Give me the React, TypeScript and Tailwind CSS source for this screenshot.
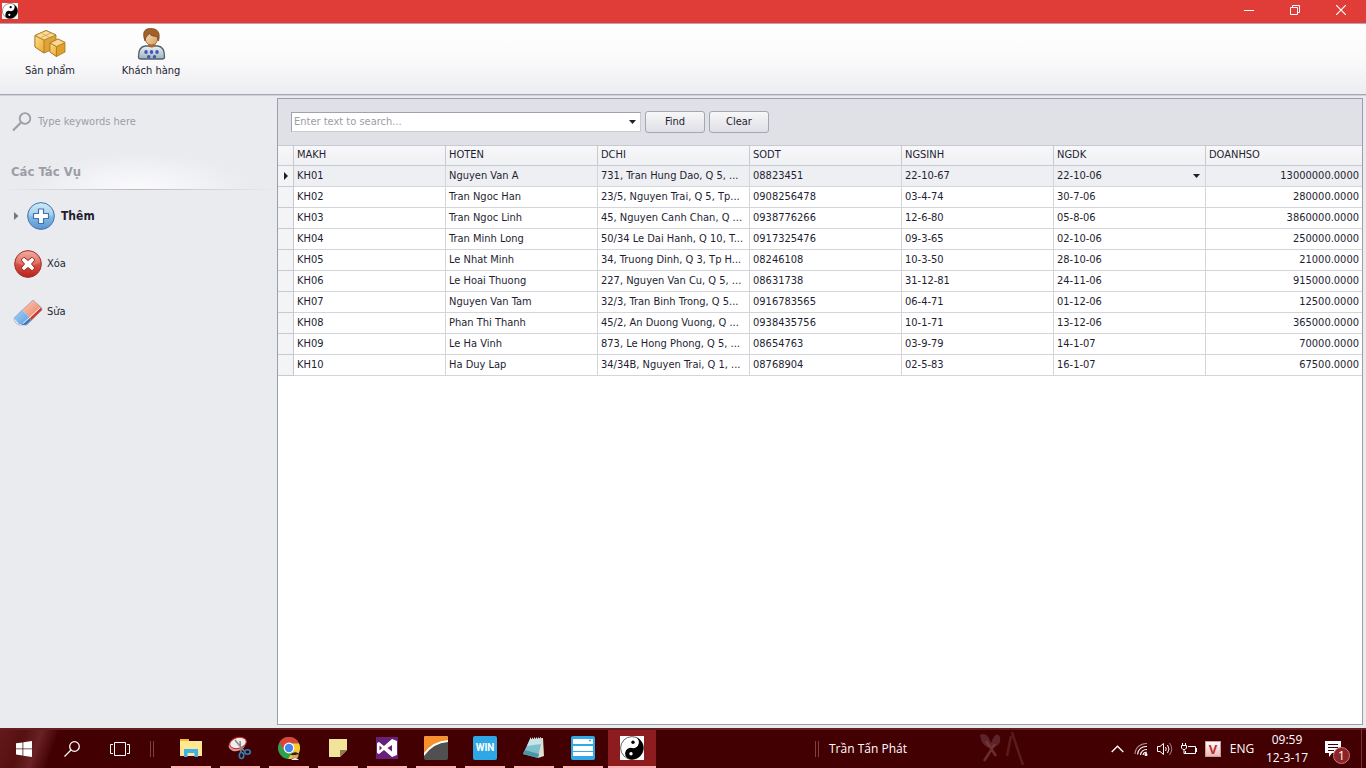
import React from 'react';

interface Customer {
  id: string;
  name: string;
  address: string;
  phone: string;
  birthday: string;
  registered: string;
  sales: string;
}

const customers: Customer[] = [
  { id: 'KH01', name: 'Nguyen Van A', address: '731, Tran Hung Dao, Q 5, ...', phone: '08823451', birthday: '22-10-67', registered: '22-10-06', sales: '13000000.0000' },
  { id: 'KH02', name: 'Tran Ngoc Han', address: '23/5, Nguyen Trai, Q 5, Tp...', phone: '0908256478', birthday: '03-4-74', registered: '30-7-06', sales: '280000.0000' },
  { id: 'KH03', name: 'Tran Ngoc Linh', address: '45, Nguyen Canh Chan, Q ...', phone: '0938776266', birthday: '12-6-80', registered: '05-8-06', sales: '3860000.0000' },
  { id: 'KH04', name: 'Tran Minh Long', address: '50/34 Le Dai Hanh, Q 10, T...', phone: '0917325476', birthday: '09-3-65', registered: '02-10-06', sales: '250000.0000' },
  { id: 'KH05', name: 'Le Nhat Minh', address: '34, Truong Dinh, Q 3, Tp H...', phone: '08246108', birthday: '10-3-50', registered: '28-10-06', sales: '21000.0000' },
  { id: 'KH06', name: 'Le Hoai Thuong', address: '227, Nguyen Van Cu, Q 5, ...', phone: '08631738', birthday: '31-12-81', registered: '24-11-06', sales: '915000.0000' },
  { id: 'KH07', name: 'Nguyen Van Tam', address: '32/3, Tran Binh Trong, Q 5...', phone: '0916783565', birthday: '06-4-71', registered: '01-12-06', sales: '12500.0000' },
  { id: 'KH08', name: 'Phan Thi Thanh', address: '45/2, An Duong Vuong, Q ...', phone: '0938435756', birthday: '10-1-71', registered: '13-12-06', sales: '365000.0000' },
  { id: 'KH09', name: 'Le Ha Vinh', address: '873, Le Hong Phong, Q 5, ...', phone: '08654763', birthday: '03-9-79', registered: '14-1-07', sales: '70000.0000' },
  { id: 'KH10', name: 'Ha Duy Lap', address: '34/34B, Nguyen Trai, Q 1, ...', phone: '08768904', birthday: '02-5-83', registered: '16-1-07', sales: '67500.0000' },
];

const columns = ['MAKH', 'HOTEN', 'DCHI', 'SODT', 'NGSINH', 'NGDK', 'DOANHSO'];

const YinYang = ({ className }: { className: string }) => (
  <svg viewBox="0 0 24 24" className={className}>
    <rect width="24" height="24" fill="#fff" />
    <circle cx="12" cy="12" r="11.4" fill="#fff" stroke="#222" strokeWidth=".7" />
    <path d="M12 .6A11.4 11.4 0 0 1 12 23.4A5.700 5.700 0 0 1 12 12A5.700 5.700 0 0 0 12 .6Z" fill="#000" transform="rotate(12 12 12)" />
    <circle cx="13" cy="6.300" r="1.700" fill="#000" />
    <circle cx="11" cy="17.700" r="1.700" fill="#fff" />
  </svg>
);

const BoxesIcon = () => (
  <svg width="32" height="32" viewBox="0 0 32 32">
    <defs>
      <linearGradient id="boxFront" x1="0" y1="0" x2="1" y2="1">
        <stop offset="0" stopColor="#ffdf8e" />
        <stop offset="1" stopColor="#e9a92d" />
      </linearGradient>
    </defs>
    <g stroke="#a87421" strokeWidth=".8" strokeLinejoin="round">
      <path d="M1 7.500 12 2.500 22 7 22 20 10 25 1 19Z" fill="#dfa33b" />
      <path d="M1 7.500 10 12V25L1 19Z" fill="url(#boxFront)" />
      <path d="M1 7.500 12 2.500 22 7 10 12Z" fill="#fbdc94" />
      <path d="M16 15 24 11 31 14.500V24L22.500 28.500 16 24Z" fill="#dfa02e" />
      <path d="M16 15 22.500 18.500V28.500L16 24Z" fill="url(#boxFront)" />
      <path d="M16 15 24 11 31 14.500 22.500 18.500Z" fill="#fbd98c" />
    </g>
    <path d="M7 9.500 17 4.900M8 5.500 15 9" stroke="#c79845" strokeWidth=".7" fill="none" />
  </svg>
);

const CustomerIcon = () => (
  <svg width="32" height="32" viewBox="0 0 32 32">
    <defs>
      <linearGradient id="shirt" x1="0" y1="0" x2="0" y2="1">
        <stop offset="0" stopColor="#eef2f5" />
        <stop offset="1" stopColor="#9fb0bd" />
      </linearGradient>
      <linearGradient id="face" x1="0" y1="0" x2="1" y2="1">
        <stop offset="0" stopColor="#ffe7c4" />
        <stop offset="1" stopColor="#d39a5e" />
      </linearGradient>
    </defs>
    <path d="M3.500 29C3.500 21 6 18.500 10 18H23C27 18.500 29.500 22 29.500 29Q29.500 31 27 31H6Q3.500 31 3.500 29Z" fill="url(#shirt)" stroke="#4f6170" strokeWidth="1.300" />
    <path d="M13 14H20.500V18Q16.500 21 13 18Z" fill="#a9683a" />
    <path d="M10 8Q10 1.500 16.500 1.500Q23 1.500 23 8Q23 17 16.500 17Q10 17 10 8Z" fill="url(#face)" stroke="#96602f" strokeWidth=".8" />
    <path d="M10 13C7 5 9 .6 15 .5C22 .1 26 4 23.500 13L22 8.500C18 8.500 15 7.500 14 5C13.500 7.500 12 8.500 11 9Z" fill="#a3602b" stroke="#743f17" strokeWidth=".7" />
    <g fill="#3e56b4">
      <ellipse cx="11" cy="24" rx="1.700" ry="2.100" />
      <ellipse cx="16.500" cy="24" rx="1.700" ry="2.100" />
      <ellipse cx="22" cy="24" rx="1.700" ry="2.100" />
      <ellipse cx="13.700" cy="28.700" rx="1.700" ry="1.700" />
      <ellipse cx="19.500" cy="28.700" rx="1.700" ry="1.700" />
    </g>
  </svg>
);

const AddIcon = () => (
  <svg width="28" height="28" viewBox="0 0 28 28">
    <defs>
      <linearGradient id="addBlue" x1="0" y1="0" x2="0" y2="1">
        <stop offset="0" stopColor="#c4e6f5" />
        <stop offset=".5" stopColor="#86bfe3" />
        <stop offset="1" stopColor="#5993cf" />
      </linearGradient>
    </defs>
    <circle cx="14" cy="14" r="13.400" fill="url(#addBlue)" stroke="#4777b3" />
    <path d="M2 13C2 -2 26 -2 26 13Q14 18 2 13Z" fill="#fff" opacity=".22" />
    <path d="M11.500 7H16.500V11.500H21.500V16.500H16.500V21.500H11.500V16.500H6.500V11.500H11.500Z" fill="#fff" stroke="#4272ad" strokeWidth="1.200" strokeLinejoin="round" />
  </svg>
);

const DeleteIcon = () => (
  <svg width="28" height="28" viewBox="0 0 28 28">
    <defs>
      <linearGradient id="deleteRed" x1="0" y1="0" x2="0" y2="1">
        <stop offset="0" stopColor="#eea295" />
        <stop offset=".5" stopColor="#d65345" />
        <stop offset="1" stopColor="#b8201b" />
      </linearGradient>
    </defs>
    <circle cx="14" cy="14" r="13.400" fill="url(#deleteRed)" stroke="#a63832" />
    <path d="M2 13C2 -2 26 -2 26 13Q14 18 2 13Z" fill="#fff" opacity=".15" />
    <path d="M10 7.200 14 10.500 18 7.200 20.800 10 17.500 14 20.800 18 18 20.800 14 17.500 10 20.800 7.200 18 10.500 14 7.200 10Z" fill="#fff" stroke="#9f2522" strokeWidth="1" strokeLinejoin="round" />
  </svg>
);

const EraserIcon = () => (
  <svg width="30" height="28" viewBox="0 0 30 28">
    <defs>
      <linearGradient id="rubberRed" x1="0" y1="0" x2="1" y2="1">
        <stop offset="0" stopColor="#f9cbb5" />
        <stop offset="1" stopColor="#ee8064" />
      </linearGradient>
      <linearGradient id="rubberBlue" x1="0" y1="0" x2="1" y2="1">
        <stop offset="0" stopColor="#a5d0f8" />
        <stop offset="1" stopColor="#5c9fe2" />
      </linearGradient>
    </defs>
    <path d="M9 12 20 2 28 9 17 20Z" fill="url(#rubberRed)" />
    <path d="M28 9 29 12 18 22.500 17 20Z" fill="#cf3a2b" />
    <path d="M1 20 9 12 17 20 11 26 6 26Z" fill="url(#rubberBlue)" />
    <path d="M11 25 17 20 18 22.500 13 27H8Z" fill="#3c79c3" />
    <path d="M10 25.500 27.500 9.500" stroke="#fbe9e4" strokeWidth="1" />
    <path d="M1 20 20 2 29 10V12L14 27H6Q1 25 1 20Z" fill="none" stroke="#7d8ab0" strokeWidth=".5" />
  </svg>
);

const Down = () => (
  <svg width="7" height="4" viewBox="0 0 7 4">
    <path d="M0 0H7L3.500 4Z" fill="#1e1e32" />
  </svg>
);

const TitleBar = () => (
  <header className="flex h-6 shrink-0 items-start justify-between border-b border-[#b5a5b1] bg-[#e03c38] pr-0.5">
    <YinYang className="ml-0.5 mt-[3px] h-4 w-4" />
    <div className="flex h-5">
      <button aria-label="Minimize" className="flex w-[46px] items-center justify-center">
        <svg width="10" height="10" viewBox="0 0 10 10"><path d="M0 5.500H10" stroke="#fff" /></svg>
      </button>
      <button aria-label="Restore" className="flex w-[46px] items-center justify-center">
        <svg width="10" height="10" viewBox="0 0 10 10" fill="none" stroke="#fff">
          <path d="M.5 2.500H7.500V9.500H.5ZM2.500 2V.5H9.500V7.500H8" />
        </svg>
      </button>
      <button aria-label="Close" className="flex w-[46px] items-center justify-center">
        <svg width="10" height="10" viewBox="0 0 10 10"><path d="M0 0 10 10M10 0 0 10" stroke="#fff" strokeWidth="1.200" /></svg>
      </button>
    </div>
  </header>
);

const Ribbon = () => (
  <nav className="flex h-[71px] shrink-0 border-b border-[#a6a8b5] bg-gradient-to-b from-white via-[#fafafb] to-[#ecedf1]">
    <button className="flex w-[100px] flex-col items-center gap-0.5 pt-1">
      <BoxesIcon />
      <span className="leading-[18px]">Sản phẩm</span>
    </button>
    <button className="flex w-[102px] flex-col items-center gap-0.5 pt-1">
      <CustomerIcon />
      <span className="leading-[18px]">Khách hàng</span>
    </button>
  </nav>
);

const Sidebar = () => (
  <aside className="w-[277px] shrink-0">
    <label className="mt-1 flex h-10 items-center gap-1.5 pl-3">
      <svg width="20" height="20" viewBox="0 0 20 20" fill="none" stroke="#9c9da7">
        <circle cx="13" cy="6.500" r="5.300" strokeWidth="1.800" />
        <path d="M9 10.500 1 18.500" strokeWidth="2.200" />
      </svg>
      <input
        type="text"
        aria-label="Search tasks"
        placeholder="Type keywords here"
        className="w-52 bg-transparent outline-none placeholder:text-[#9c9da7]"
      />
    </label>
    <div className="mt-2 h-[39px] bg-[radial-gradient(ellipse_110px_36px_at_bottom,#fbfbfc_0%,#eaebef_100%)]">
      <h2 className="pl-[11px] pt-3 text-[13px] font-bold leading-5 text-[#9c9da7]">Các Tác Vụ</h2>
    </div>
    <div className="h-px bg-gradient-to-r from-[#eaebef] via-[#b7bbc6] to-[#eaebef]" />
    <ul className="pt-0.5">
      <li>
        <button className="flex h-12 items-center gap-1.5 pl-3.5 text-[12px] font-bold">
          <svg width="6" height="8" viewBox="0 0 6 8" className="mr-px">
            <path d="M0 0 4.500 4 0 8Z" fill="#77777d" />
          </svg>
          <AddIcon />
          Thêm
        </button>
      </li>
      <li>
        <button className="flex h-12 items-center gap-[5px] pl-3.5">
          <DeleteIcon />
          Xóa
        </button>
      </li>
      <li>
        <button className="flex h-12 items-center gap-1 pl-[13px]">
          <EraserIcon />
          Sửa
        </button>
      </li>
    </ul>
  </aside>
);

const SearchBar = () => (
  <div className="flex h-[46px] items-center gap-1 bg-[#e0e1e6] pl-[13px]">
    <div className="flex h-5 w-[350px] items-center border border-t-[#a0a2b0] border-l-[#a0a2b0] border-[#c9cad2] bg-white">
      <input
        type="text"
        aria-label="Search text"
        placeholder="Enter text to search..."
        className="min-w-0 flex-1 bg-transparent px-0.5 outline-none placeholder:text-[#9c9da7]"
      />
      <button aria-label="Search history" className="flex h-full w-4 items-center justify-center">
        <Down />
      </button>
    </div>
    <button className="h-[22px] w-[60px] rounded-[3px] border border-[#a4a6b2] bg-gradient-to-b from-[#f7f7f9] to-[#dfe0e6]">Find</button>
    <button className="h-[22px] w-[60px] rounded-[3px] border border-[#a4a6b2] bg-gradient-to-b from-[#f7f7f9] to-[#dfe0e6]">Clear</button>
  </div>
);

const CustomerTable = () => (
  <table className="w-full table-fixed border-separate border-spacing-0">
    <colgroup>
      <col className="w-[16px]" />
      {columns.map((column) => (
        <col key={column} className={column === 'DOANHSO' ? '' : 'w-[152px]'} />
      ))}
    </colgroup>
    <thead>
      <tr className="h-[21px] bg-gradient-to-b from-[#f8f8fa] to-[#eff0f3]">
        <td className="border-y border-r border-[#c8cad3] p-0" />
        {columns.map((column) => (
          <th key={column} className="border-y border-r border-[#c8cad3] p-0 pb-0.5 pl-[3px] text-left font-normal last:border-r-0">
            {column}
          </th>
        ))}
      </tr>
    </thead>
    <tbody>
      {customers.map((customer, index) => {
        const cell = 'truncate border-r border-b border-[#d4d5da] p-0 pl-[3px]';
        return (
          <tr key={customer.id} className={`h-[21px] ${index === 0 ? 'bg-[#eeeff2]' : 'bg-white'}`}>
            <td className="border-r border-b border-[#c8cad3] bg-[#f4f4f7] p-0">
              {index === 0 && (
                <svg width="4" height="8" viewBox="0 0 4 8" className="mx-auto">
                  <path d="M0 0 4 4 0 8Z" fill="#1e1e32" />
                </svg>
              )}
            </td>
            <td className={cell}>{customer.id}</td>
            <td className={cell}>{customer.name}</td>
            <td className={cell}>{customer.address}</td>
            <td className={cell}>{customer.phone}</td>
            <td className={cell}>{customer.birthday}</td>
            <td className={cell}>
              {index === 0 ? (
                <div className="flex items-center justify-between pr-[5px]">
                  {customer.registered}
                  <button aria-label="Pick date"><Down /></button>
                </div>
              ) : customer.registered}
            </td>
            <td className="border-b border-[#d4d5da] p-0 pr-[3px] text-right">{customer.sales}</td>
          </tr>
        );
      })}
    </tbody>
  </table>
);

const ExplorerIcon = () => (
  <svg width="24" height="24" viewBox="0 0 24 24">
    <path d="M1 3H10V5H23V20H1Z" fill="#ffe793" />
    <path d="M1 3H10V5H1Z" fill="#f5bd36" />
    <path d="M5 21V13H19V21H15.500V17H8.500V21Z" fill="#3db2e8" />
  </svg>
);

const SnipIcon = () => (
  <svg width="24" height="24" viewBox="0 0 24 24" fill="none">
    <ellipse cx="9" cy="9" rx="8.500" ry="6" fill="#d99" transform="rotate(-15 9 9)" />
    <ellipse cx="10" cy="7" rx="8.500" ry="5.500" fill="#efecec" stroke="#c0292d" strokeWidth="1" transform="rotate(-15 10 7)" />
    <path d="M7 4 16 15M12 5 13 16" stroke="#888" strokeWidth="1.500" />
    <ellipse cx="13.500" cy="19.500" rx="2.200" ry="3" stroke="#2a83b8" strokeWidth="1.600" />
    <ellipse cx="19.500" cy="16" rx="2.800" ry="2.200" stroke="#2a83b8" strokeWidth="1.600" />
  </svg>
);

const ChromeIcon = () => (
  <svg width="24" height="24" viewBox="0 0 24 24">
    <circle cx="12" cy="12" r="11" fill="#2da14f" />
    <path d="M2.500 6.500A11 11 0 0 1 22 7.500H12L7 14.500Z" fill="#dc4437" />
    <path d="M22 7.500A11 11 0 0 1 11 23L16.500 14.500 12 7.500Z" fill="#fbcb2e" />
    <circle cx="12" cy="12" r="5.400" fill="#fff" />
    <circle cx="12" cy="12" r="4.200" fill="#4587f2" />
    <circle cx="18" cy="19" r="3.500" fill="#d5a75a" />
    <path d="M13 19Q18 14 22 18L18 19Z" fill="#2b211c" />
    <path d="M14 24Q18 20 22 24Z" fill="#eee" />
  </svg>
);

const StickyIcon = () => (
  <svg width="24" height="24" viewBox="0 0 24 24">
    <path d="M3 3H21V14L14 21H3Z" fill="#f0e49a" />
    <path d="M14 14H21L14 21Z" fill="#927a55" />
  </svg>
);

const StudioIcon = () => (
  <svg width="24" height="24" viewBox="0 0 24 24">
    <path d="M1 1H23V23H1Z" fill="#68217a" />
    <path d="M17 3 22 5V19L17 21 9 14 4 18 2 17V7L4 6 9 10ZM17 9 12.500 12 17 15.500ZM4.500 9.500V14.500L7 12Z" fill="#fff" fillRule="evenodd" />
  </svg>
);

const SwooshIcon = () => (
  <svg width="24" height="24" viewBox="0 0 24 24">
    <rect width="24" height="24" rx="2" fill="#505050" />
    <path d="M0 20V2Q0 0 2 0H22Q24 0 24 2V6Q9 7 0 20Z" fill="#fff" />
    <path d="M0 17V2Q0 0 2 0H22Q24 0 24 2V4Q9 5 0 17Z" fill="#f8912b" />
  </svg>
);

const WinIcon = () => (
  <span className="flex h-6 w-6 items-center justify-center rounded-xs bg-[#2ea7e7] font-['Roboto',sans-serif] text-[10px] font-bold text-white">
    WIN
  </span>
);

const NotepadIcon = () => (
  <svg width="24" height="24" viewBox="0 0 24 24">
    <path d="M9 3 21 2 22 20 16 22Z" fill="#e2dfd0" />
    <path d="M8 3 20 3 16 22 1 18Z" fill="#80c0cc" />
    <path d="M8 3 20 3 19 8 5 10Z" fill="#c5e5e9" />
    <path d="M1 18 16 22 17 18 3 14Z" fill="#4c97a7" />
    <path d="M8 2.500 20 2" stroke="#ddd" strokeWidth="1.500" strokeDasharray="1 1" />
  </svg>
);

const ServerIcon = () => (
  <svg width="24" height="24" viewBox="0 0 24 24">
    <rect width="24" height="24" rx="2" fill="#30a9e8" />
    <path d="M2 3H22V8H2ZM2 10H22V15H2ZM2 16H22V20H2Z" fill="#fff" />
    <path d="M18 4.500H20" stroke="#30a9e8" strokeWidth="1.500" />
  </svg>
);

const apps = [
  { name: 'File Explorer', icon: <ExplorerIcon /> },
  { name: 'Snipping Tool', icon: <SnipIcon /> },
  { name: 'Google Chrome', icon: <ChromeIcon /> },
  { name: 'Sticky Notes', icon: <StickyIcon /> },
  { name: 'Visual Studio', icon: <StudioIcon /> },
  { name: 'Swoosh', icon: <SwooshIcon /> },
  { name: 'Windows panel', icon: <WinIcon /> },
  { name: 'Notepad', icon: <NotepadIcon /> },
  { name: 'Server', icon: <ServerIcon /> },
];

const Grip = () => (
  <div className="h-4 w-[4px] border-x border-[#7c4040]" />
);

// wallpaper shining through the bar
const Petals = () => (
  <svg width="50" height="36" viewBox="0 0 50 36" fill="none" className="ml-auto mr-[76px]">
    <path d="M1 4Q8 0 12 12Q17 -1 21 6Q23 15 12 17Q2 16 1 4Z" fill="#5e2328" />
    <path d="M7 10 17 25M16 13 5 30" stroke="#7a3f3f" strokeWidth="2.500" opacity=".7" />
    <path d="M33 1Q37 14 44 34M32 5 28 25" stroke="#5a1b1d" strokeWidth="2.500" />
  </svg>
);

const Tray = () => (
  <div className="flex items-center">
    <button aria-label="Show hidden icons" className="flex w-6 justify-center">
      <svg width="13" height="8" viewBox="0 0 13 8" fill="none" stroke="#fff" strokeWidth="1.300"><path d="M.7 7 6.500 1.200 12.300 7" /></svg>
    </button>
    <button aria-label="Network" className="flex w-6 justify-center">
      <svg width="14" height="14" viewBox="0 0 14 14" fill="none" stroke="#fff" strokeWidth="1.100">
        <path d="M1 12A11 11 0 0 1 13 1.500" opacity=".6" />
        <path d="M3.500 12.500A8.500 8.500 0 0 1 13 4.500M6.500 13A6 6 0 0 1 13 7.500M9 13A3.500 3.500 0 0 1 13 10.300" />
        <circle cx="12" cy="12.500" r="1" fill="#fff" />
      </svg>
    </button>
    <button aria-label="Volume" className="flex w-6 justify-center">
      <svg width="16" height="14" viewBox="0 0 16 14" fill="none" stroke="#fff">
        <path d="M.5 4.500H3L6.500 1.500V12.500L3 9.500H.5Z" />
        <path d="M8.500 5Q10 7 8.500 9M10.500 3Q13.500 7 10.500 11" />
        <path d="M12.500 1Q17 7 12.500 13" opacity=".5" />
      </svg>
    </button>
    <button aria-label="Battery" className="flex w-6 justify-center">
      <svg width="17" height="14" viewBox="0 0 17 14" fill="none" stroke="#fff">
        <path d="M7 4.500H14.500V11.500H4.500V9M15.500 6V10" />
        <path d="M1.500 1V3M4.500 1V3M.5 3.500H5.500V6L4 7.500H2L.5 6ZM3 8V11.500H5" />
      </svg>
    </button>
    <button aria-label="Vietnamese keyboard" className="flex w-6 justify-center">
      <span className="flex h-4 w-4 items-center justify-center border border-[#c79c9c] bg-gradient-to-b from-white to-[#e5b9b9] text-[13px] font-bold text-[#c22b31]">V</span>
    </button>
    <button className="w-[34px] text-center">ENG</button>
    <button className="w-14 text-center leading-[18px]">
      <span className="block">09:59</span>
      <span className="block">12-3-17</span>
    </button>
    <button aria-label="Notifications" className="relative mr-2.5 flex w-9 justify-center">
      <svg width="16" height="16" viewBox="0 0 16 16">
        <path d="M0 0H16V12H7L4 16V12H0Z" fill="#fff" />
        <path d="M3 3.500H13M3 6.500H13M3 9.500H9" stroke="#430003" />
      </svg>
      <span className="absolute left-[18px] top-1.5 flex h-[17px] w-[17px] items-center justify-center rounded-full border border-[#c77] bg-[#8c2426] text-[12px] text-white">1</span>
    </button>
    <div className="h-10 w-[5px] border-l border-[#6d3537]" />
  </div>
);

const Taskbar = () => (
  <footer className="flex h-10 shrink-0 items-center border-t-2 border-[#632022] bg-[#430003] bg-[linear-gradient(110deg,#64191b_0px,#56100f_24px,#6a2224_40px,#430003_56px)] font-['Open_Sans','Noto_Sans',sans-serif] text-[12px] text-white">
    <button aria-label="Start" className="flex w-12 justify-center">
      <svg width="16" height="16" viewBox="0 0 16 16" fill="#fff">
        <path d="M0 2.300 6.500 1.400V7.500H0ZM7.300 1.300 16 0V7.500H7.300ZM0 8.300H6.500V14.500L0 13.600ZM7.300 8.300H16V16L7.300 14.700Z" />
      </svg>
    </button>
    <button aria-label="Search" className="flex w-12 justify-center">
      <svg width="16" height="16" viewBox="0 0 16 16" fill="none" stroke="#fff" strokeWidth="1.300">
        <circle cx="10.500" cy="5.500" r="4.800" />
        <path d="M7 9 .5 15.500" />
      </svg>
    </button>
    <button aria-label="Task view" className="flex w-12 justify-center">
      <svg width="20" height="14" viewBox="0 0 20 14" fill="none" stroke="#fff">
        <path d="M4.500 .5H15.500V13.500H4.500ZM3 2.500H.5V11.500H3M17 2.500H19.500V11.500H17" />
      </svg>
    </button>
    <div className="flex w-[23px] pl-1.5"><Grip /></div>
    <div className="flex h-full gap-px">
      {apps.map((app) => (
        <button key={app.name} aria-label={app.name} className="flex h-full w-12 flex-col items-center px-1">
          <span className="flex flex-1 items-center">{app.icon}</span>
          <span className="h-0.5 w-full bg-[#ffb0b2]" />
        </button>
      ))}
      <button aria-label="Customer manager" className="flex h-full w-12 flex-col items-center bg-[#8c1c1d]">
        <span className="flex flex-1 items-center"><YinYang className="h-6 w-6" /></span>
        <span className="h-0.5 w-full bg-[#ffb0b2]" />
      </button>
    </div>
    <div className="ml-auto flex w-[290px] items-center gap-2.5">
      <Grip />
      <span>Trần Tấn Phát</span>
      <Petals />
    </div>
    <Tray />
  </footer>
);

const App = () => {
  return (
    <div className="flex h-screen flex-col bg-[#eaebef] font-['DejaVu_Sans_Condensed','Noto_Sans',sans-serif] text-[11px] leading-4 text-[#1e1e32]">
      <TitleBar />
      <Ribbon />
      <main className="flex min-h-0 flex-1 border-t border-[#d0d1d6] pt-0.5 pr-[3px] pb-[3px]">
        <Sidebar />
        <section className="min-w-0 flex-1 overflow-auto border border-[#9c9eae] bg-white">
          <SearchBar />
          <CustomerTable />
        </section>
      </main>
      <Taskbar />
    </div>
  );
};

export default App;
